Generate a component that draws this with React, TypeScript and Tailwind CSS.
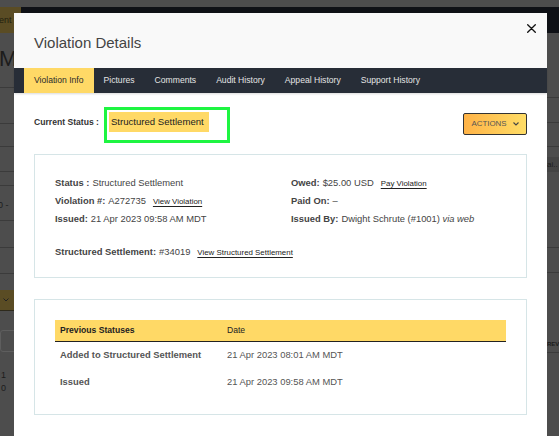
import React from 'react';

const tabs = ['Violation Info', 'Pictures', 'Comments', 'Audit History', 'Appeal History', 'Support History'];

const history = [
  { status: 'Added to Structured Settlement', date: '21 Apr 2023 08:01 AM MDT' },
  { status: 'Issued', date: '21 Apr 2023 09:58 AM MDT' },
];

const Link = ({ children }: { children: React.ReactNode }) => (
  <span className="ml-[7px] text-[7.9px] text-[#222] underline underline-offset-[2px] decoration-[#222]">{children}</span>
);

const Field = ({ label, children }: { label: string; children: React.ReactNode }) => (
  <div className="h-[18px] flex items-center whitespace-nowrap">
    <span className="font-bold">{label}</span>
    <span className="ml-[3px]">{children}</span>
  </div>
);

const ViolationDetails = () => {
  return (
    <div className="relative w-[559px] h-[436px] overflow-hidden bg-[#4d4d4d] flex flex-col font-['Liberation_Sans',Arial,sans-serif]">
      {/* page behind the modal */}
      <div className="h-[7px]" />
      <div className="h-[26px] flex">
        <div className="w-[21px] bg-[#5a4c24] flex items-center overflow-hidden pt-[2px]">
          <span className="whitespace-nowrap text-[9px] text-[#22200f] -ml-[1px]">ent</span>
        </div>
        <div className="flex-1 bg-[#0f1116]" />
      </div>
      <div className="flex-1 flex text-[#1c1c1c]">
        <div className="w-[14px] overflow-hidden flex flex-col">
          <div className="h-[55px] border-b border-[#3b3b3b] pt-[15px] text-[22px] leading-none whitespace-nowrap -ml-[1px]">Ma</div>
          <div className="h-[36px] border-b border-[#3b3b3b]" />
          <div className="h-[23px] border-b border-[#3b3b3b]" />
          <div className="h-[25px] border-b border-[#3b3b3b]" />
          <div className="h-[14px] border-b border-[#3b3b3b]" />
          <div className="h-[35px] border-b border-[#3b3b3b] flex items-end pb-[8px] text-[9px] whitespace-nowrap -ml-[2px]">0 -</div>
          <div className="h-[27px] border-b border-[#3b3b3b]" />
          <div className="h-[26px] border-b border-[#3b3b3b]" />
          <div className="mt-[16px] h-[21px] bg-[#5a4c24] border-b border-[#2e2a1c] flex items-center pl-[3px]">
            <svg width="6" height="4" viewBox="0 0 6 4" fill="none" stroke="#222" strokeWidth="1"><path d="M0.5 0.5L3 3L5.5 0.5" /></svg>
          </div>
          <div className="mt-[19px] h-[22px] w-[40px] rounded-[3px] border border-[#5e5e5e]" />
          <div className="mt-[17px] text-[9px] leading-[13px] pl-[1px]">1<br />0</div>
        </div>
        <div className="flex-1" />
        <div className="w-[12px] overflow-hidden flex flex-col">
          <div className="h-[65px] border-b border-[#3b3b3b]" />
          <div className="h-[25px] border-b border-[#3b3b3b]" />
          <div className="h-[24px] border-b border-[#3b3b3b]" />
          <div className="mt-[10px] h-[15px] bg-[#444] text-[8px] flex items-center whitespace-nowrap">ai..</div>
          <div className="h-[76px] border-b border-[#3b3b3b]" />
          <div className="h-[25px] border-b border-[#3b3b3b]" />
          <div className="h-[80px] border-b border-[#3b3b3b] flex items-end pb-[3px] text-[6px] font-bold whitespace-nowrap">REV</div>
        </div>
      </div>

      {/* modal */}
      <div className="absolute left-[14px] top-[13px] w-[533px] h-[423px] bg-white flex flex-col">
        <div className="relative h-[55px] bg-[#f9f9f9] flex items-center pl-[20px] pt-[5px]">
          <span className="text-[15px] text-[#444]">Violation Details</span>
          <button className="absolute right-[11px] top-[11px]">
            <svg width="9" height="9" viewBox="0 0 9 9" stroke="#111" strokeWidth="1.3" strokeLinecap="round">
              <path d="M0.7 0.7L8.3 8.3M8.3 0.7L0.7 8.3" />
            </svg>
          </button>
        </div>

        <div className="h-[25px] bg-[#272d37] flex pl-[10px] shadow-[0_1px_2px_rgba(0,0,0,0.15)]">
          {tabs.map((t, i) => (
            <div
              key={t}
              className={`px-[10px] flex items-center text-[8.6px] whitespace-nowrap ${i === 0 ? 'bg-[#ffd966] text-[#2b2b2b]' : 'text-[#e4e4e4]'}`}
            >
              {t}
            </div>
          ))}
        </div>

        <div className="px-[20px] pt-[19px] text-[#444]">
          {/* current status */}
          <div className="flex justify-between items-start h-[22px]">
            <div className="flex items-center h-[20px]">
              <span className="text-[8.6px] font-bold text-[#333]">Current Status :</span>
              <span className="relative ml-[10px] h-[20px] bg-[#ffd966] flex items-center pl-[2px] pr-[5px] text-[9.6px] text-[#222]">
                Structured Settlement
                <span className="absolute left-[-5px] top-[-5px] w-[126px] h-[36px] border-[3px] border-[#1ef541]" />
              </span>
            </div>
            <button className="mt-[1px] h-[22px] w-[64px] rounded-[2px] border border-[#333] bg-gradient-to-r from-[#ffb347] to-[#ffdd66] flex items-center justify-center gap-[6px] text-[7.9px] text-[#555]">
              ACTIONS
              <svg width="6" height="4" viewBox="0 0 6 4" fill="none" stroke="#444" strokeWidth="1.1"><path d="M0.5 0.5L3 3L5.5 0.5" /></svg>
            </button>
          </div>

          {/* details */}
          <div className="mt-[20px] h-[124px] border border-[#d6e5e7] px-[20px] pt-[19px] text-[9.4px]">
            <div className="grid grid-cols-[236px_1fr]">
              <div>
                <Field label="Status :">Structured Settlement</Field>
                <Field label="Violation #:">A272735<Link>View Violation</Link></Field>
                <Field label="Issued:">21 Apr 2023 09:58 AM MDT</Field>
              </div>
              <div>
                <Field label="Owed:">$25.00 USD<Link>Pay Violation</Link></Field>
                <Field label="Paid On:">–</Field>
                <Field label="Issued By:">Dwight Schrute (#1001) <i>via web</i></Field>
              </div>
            </div>
            <div className="mt-[15px]">
              <Field label="Structured Settlement:">#34019<Link>View Structured Settlement</Link></Field>
            </div>
          </div>

          {/* previous statuses */}
          <div className="mt-[21px] h-[116px] border border-[#d6e5e7] px-[20px] pt-[20px]">
            <div className="h-[22px] bg-[#ffd966] border-b border-[#222] flex items-center text-[8.6px] text-[#222]">
              <div className="w-[172px] pl-[5px] font-bold">Previous Statuses</div>
              <div>Date</div>
            </div>
            {history.map((h) => (
              <div key={h.status} className="h-[27px] flex items-center text-[9.4px]">
                <div className="w-[172px] pl-[5px] font-bold text-[#555]">{h.status}</div>
                <div className="text-[#555]">{h.date}</div>
              </div>
            ))}
          </div>
        </div>
      </div>
    </div>
  );
};

export default ViolationDetails;
